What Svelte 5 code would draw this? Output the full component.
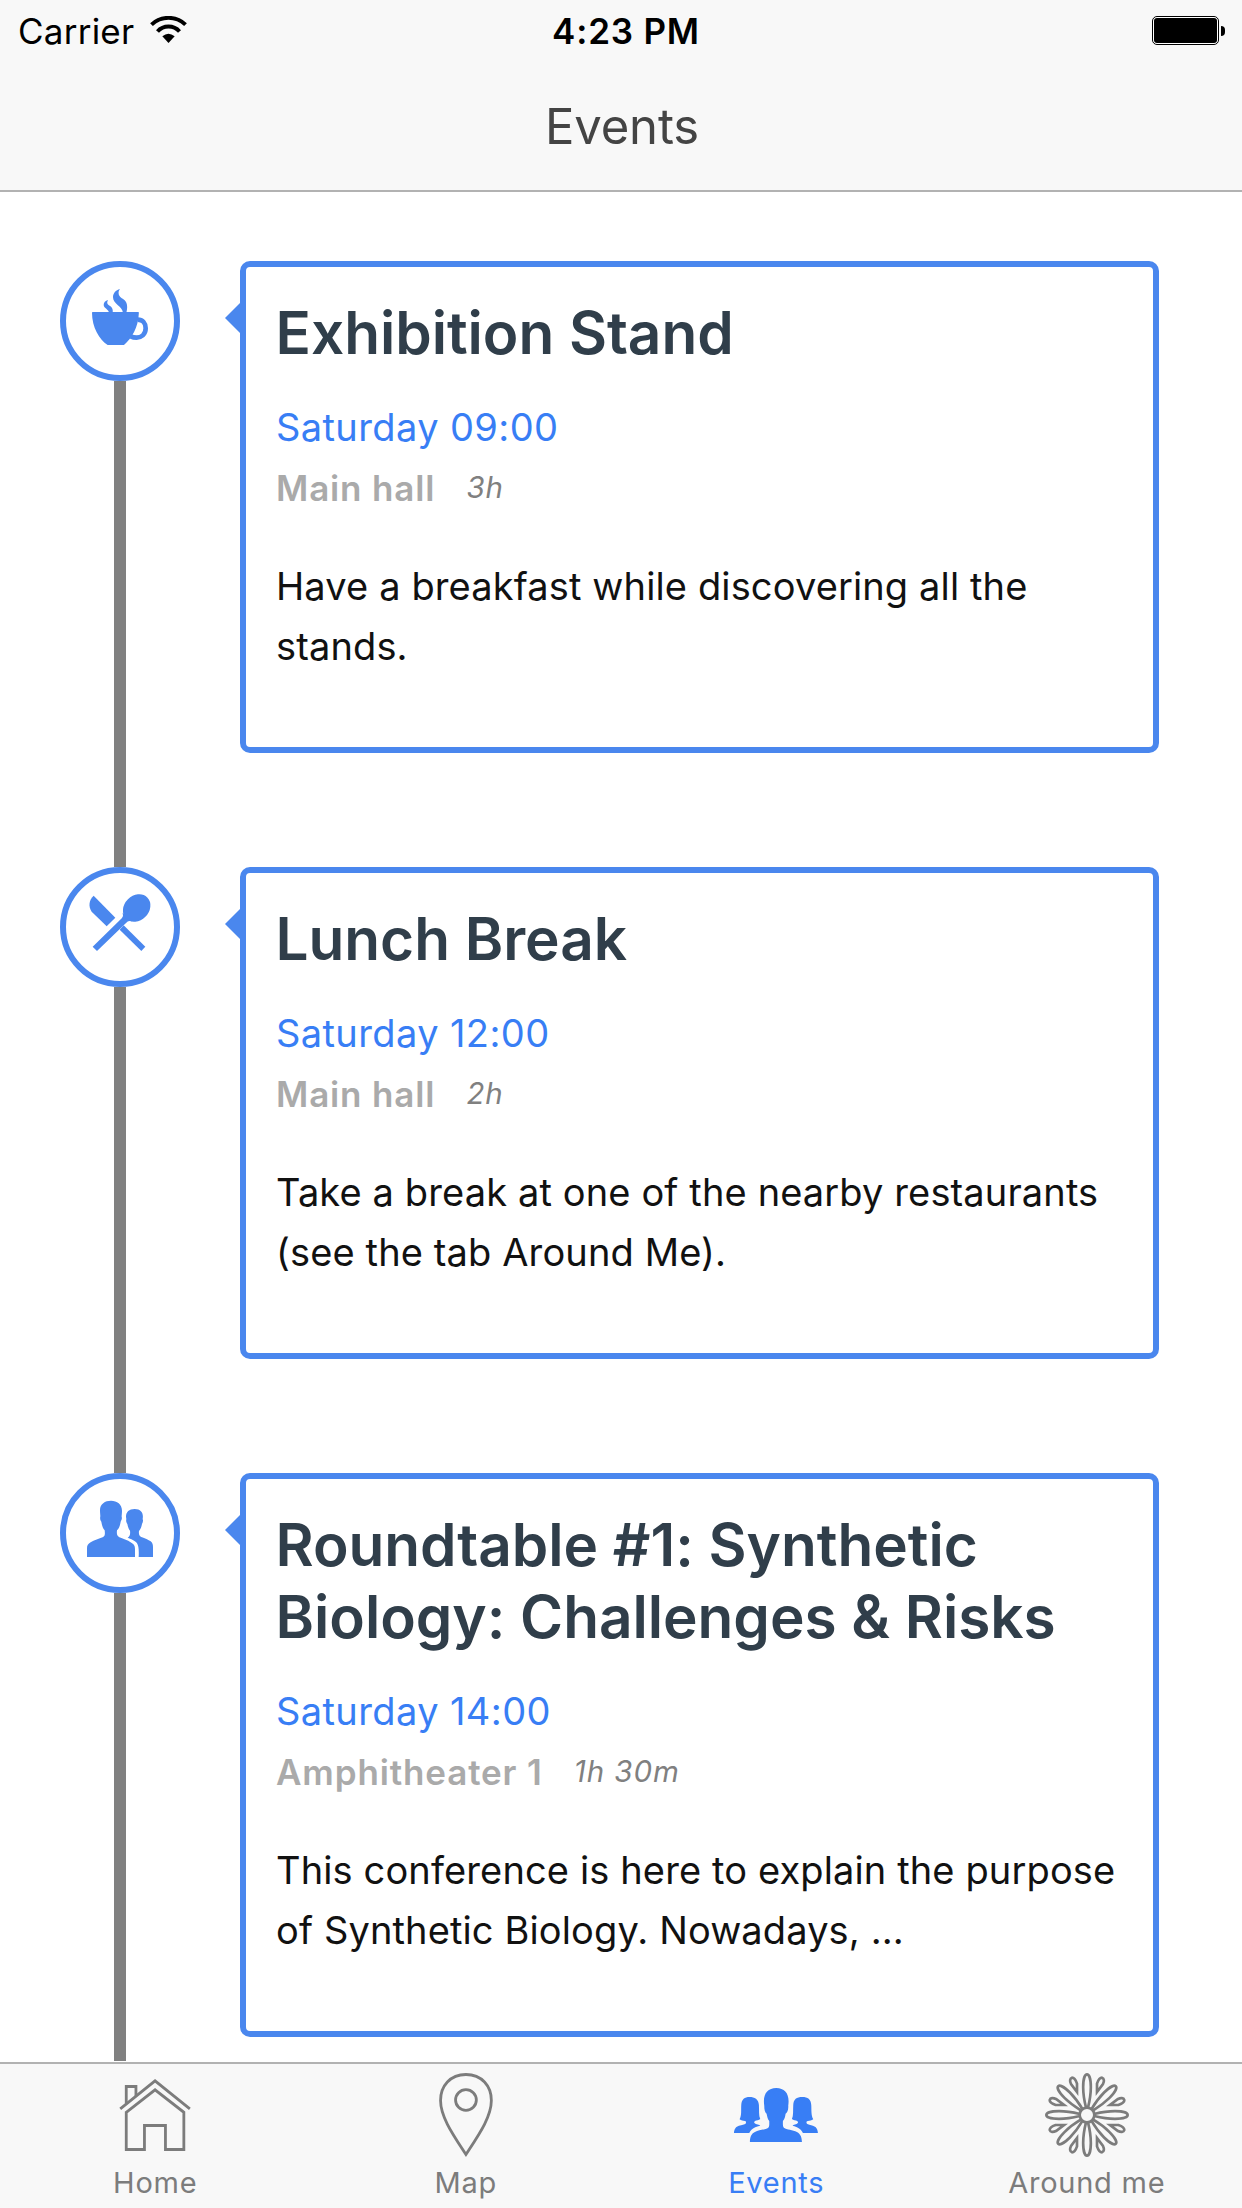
<script>
  const events = [
    {
      icon: 'coffee',
      title: 'Exhibition Stand',
      time: 'Saturday 09:00',
      place: 'Main hall',
      length: '3h',
      text: 'Have a breakfast while discovering all the stands.',
    },
    {
      icon: 'meal',
      title: 'Lunch Break',
      time: 'Saturday 12:00',
      place: 'Main hall',
      length: '2h',
      text: 'Take a break at one of the nearby restaurants (see the tab Around Me).',
    },
    {
      icon: 'people',
      title: 'Roundtable #1: Synthetic Biology: Challenges & Risks',
      time: 'Saturday 14:00',
      place: 'Amphitheater 1',
      length: '1h 30m',
      text: 'This conference is here to explain the purpose of Synthetic Biology. Nowadays, ...',
    },
  ];

  const tabs = [
    { icon: 'home', label: 'Home' },
    { icon: 'pin', label: 'Map' },
    { icon: 'group', label: 'Events', active: true },
    { icon: 'flower', label: 'Around me' },
  ];

  const petals = [0, 45, 90, 135, 180, 225, 270, 315];
  const quarters = [0, 90, 180, 270];
</script>

{#snippet eventIcon(name)}
  {#if name === 'coffee'}
    <svg class="event-icon" viewBox="78 81 324 324">
      <path d="M156 218Q156 216 158 216H295Q297 216 296.500 220C295 262 275 296 252 315H203C178 298 156 262 156 218Z" />
      <path class="handle" d="M293 239C308 239 317 250 317 265C317 284 303 293 290 293C283 293 278 292 272 289" />
      <path d="M240 147C227 150 219 160 219 172C219 192 246 198 249 218H259C263 205 263 190 254 181C247 174 237 171 236 161C235 155 237 151 240 147Z" />
      <path d="M204 180C196 182 191 188 191 195C192 205 206 208 207 218H218C220 206 215 201 209 197C203 193 199 190 204 180Z" />
    </svg>
  {:else if name === 'meal'}
    <svg class="event-icon" viewBox="78 69 324 324">
      <path d="M161 137L226 203L200 229L155 185C145 170 146 150 161 137Z" />
      <path d="M251 226L316 290L304 303L239 239Z" />
      <path d="M158 290L246 204Q251 199 248 188L277 214Q267 211 262 215L171 303Z" />
      <ellipse cx="290" cy="174" rx="45" ry="37" transform="rotate(-45 290 174)" />
    </svg>
  {:else}
    <svg class="event-icon" viewBox="78 87 324 324">
      <path d="M141 321V295C141 285 144 282 152 277C162 271 178 266 188 262C196 258 195 250 194 241C188 234 186 227 184 215C180 210 180 203 181 199C181 195 180 188 180 180C180 162 195 152 213 152C231 152 246 162 246 182C246 190 245 195 245 200C247 206 244 211 242 215C240 227 238 234 231 241C230 250 230 258 238 262C248 266 262 270 274 278C283 284 285 287 285 297V321Z" />
      <path d="M296 321C297 300 296 288 291 280C286 271 272 267 263 263C271 258 271 250 270 242C265 236 264 230 262 222C258 216 258 212 259 207C255 190 264 177 284 177C304 177 311 190 308 207C310 212 309 217 306 222C304 232 302 237 297 243C296 251 297 258 304 261C315 265 325 269 332 274C338 279 339 284 339 292V321Z" />
    </svg>
  {/if}
{/snippet}

{#snippet tabIcon(name)}
  {#if name === 'home'}
    <svg class="tab-icon line" viewBox="110.250 2070 90 90">
      <path d="M120.500 2108.800L155.300 2080.800L190.100 2108.800" />
      <path d="M126.500 2103.500V2086.500H136.200V2096" />
      <path d="M126.500 2112.300L155.300 2089.800L184.100 2112.300V2149.500H165.700V2125.500H144.700V2149.500H126.500Z" />
    </svg>
  {:else if name === 'pin'}
    <svg class="tab-icon line" viewBox="420.750 2070 90 90">
      <path d="M465.700 2074.500C450 2074.500 440.300 2086 440.300 2100.500C440.300 2117 453 2135 465.700 2154.500C478.400 2135 491.100 2117 491.100 2100.500C491.100 2086 481.400 2074.500 465.700 2074.500Z" />
      <circle cx="465.700" cy="2100" r="10.400" />
    </svg>
  {:else if name === 'group'}
    <svg class="tab-icon solid" viewBox="93.250 60 270 270">
      <path d="M150 276C150 262 154 251 165 246C178 239 197 239 205 233C209 229 208 222 208 213C203 208 202 199 200 191C195 187 193 179 193 167C188 133 202 114 229 114C256 114 270 133 265 167C266 179 262 188 257 191C256 199 254 208 249 213C249 222 248 229 252 233C260 239 279 239 291 246C302 252 306 263 306 276Z" />
      <path d="M102 249C103 236 108 230 117 227C126 224 134 224 137 221C140 216 138 213 135 213C129 213 124 211 119 208C126 196 123 178 124 165C125 148 134 141 149 141C164 141 176 148 177 165C178 182 176 197 181 207C177 211 170 211 165 213C161 217 162 219 168 222L181 226C178 230 172 229 166 232C156 237 152 242 148 249Z" />
      <path d="M354 249C353 236 348 230 339 227C332 224 324 224 321 221C318 216 320 213 324 213C329 213 335 211 340 208C333 196 335 178 334 165C333 148 324 141 307 141C290 141 281 148 280 165C279 182 281 197 276 207C280 211 287 211 292 213C296 217 295 219 290 222L278 226C281 230 286 229 291 232C301 237 305 242 309 249Z" />
    </svg>
  {:else}
    <svg class="tab-icon flower" viewBox="-135 -135 270 270">
      {#each petals as angle}
        <path transform="rotate({angle})" d="M-3 -22C-8 -42 -11.500 -62 -11.500 -84C-11.500 -108 -6 -122 0 -122C6 -122 11.500 -108 11.500 -84C11.500 -62 8 -42 3 -22" />
      {/each}
      {#each quarters as angle}
        <g transform="rotate({angle})">
          <path d="M30 -69L30 -94C34 -106 39 -112 45 -112C52 -110 52 -101 48 -93Z" />
          <path d="M-30 -69L-30 -94C-34 -106 -39 -112 -45 -112C-52 -110 -52 -101 -48 -93Z" />
        </g>
      {/each}
      <circle r="22" />
    </svg>
  {/if}
{/snippet}

<div class="screen">
  <header>
    <div class="status">
      <div class="carrier">
        <span>Carrier</span>
        <svg class="wifi" viewBox="450 48 111 81">
          <path class="arc" d="M454.500 74A74 74 0 0 1 556.500 74" />
          <path class="arc" d="M472.500 94.500A44.500 44.500 0 0 1 538.500 94.500" />
          <path d="M487 109Q505 94 524 109L505.500 129Z" />
        </svg>
      </div>
      <div class="clock">4:23 PM</div>
      <div class="battery">
        <div class="cell"><div class="charge"></div></div>
        <div class="nub"></div>
      </div>
    </div>
    <h1>Events</h1>
  </header>

  <main>
    {#each events as event}
      <article>
        <div class="rail">
          <div class="marker">{@render eventIcon(event.icon)}</div>
          <div class="connector"></div>
        </div>
        <div class="card">
          <h2>{event.title}</h2>
          <div class="time">{event.time}</div>
          <div class="meta">
            <strong>{event.place}</strong>
            <em>{event.length}</em>
          </div>
          <p>{event.text}</p>
        </div>
      </article>
    {/each}
  </main>

  <nav>
    {#each tabs as tab}
      <div class="tab" class:active={tab.active}>
        {@render tabIcon(tab.icon)}
        <span>{tab.label}</span>
      </div>
    {/each}
  </nav>
</div>

<style>
  :global(body) {
    margin: 0;
    background: #fff;
  }

  .screen {
    display: flex;
    flex-direction: column;
    width: 1242px;
    height: 2208px;
    overflow: hidden;
    background: #fff;
    font-family: Inter, 'Liberation Sans', sans-serif;
  }

  header {
    box-sizing: border-box;
    flex: none;
    height: 192px;
    border-bottom: 2px solid #b2b2b2;
    background: #f8f8f8;
  }

  .status {
    display: grid;
    grid-template-columns: 1fr auto 1fr;
    align-items: center;
    height: 63px;
    padding: 0 17px 0 18px;
    color: #000;
    font-size: 35px;
    line-height: 63px;
  }

  .carrier {
    display: flex;
    align-items: center;
    gap: 16px;
    letter-spacing: 0.24px;
  }

  .wifi {
    width: 37px;
    height: 27px;
    margin-bottom: 4px;
  }

  .arc {
    fill: none;
    stroke: #000;
    stroke-width: 12;
  }

  .clock {
    padding-left: 9px;
    font-weight: 600;
    letter-spacing: 0.81px;
  }

  .battery {
    display: flex;
    align-items: center;
    justify-content: flex-end;
    gap: 2px;
    margin-bottom: 2px;
  }

  .cell {
    box-sizing: border-box;
    width: 67px;
    height: 29px;
    padding: 1px;
    border: 1px solid #000;
    border-radius: 5px;
    background: #fff;
  }

  .charge {
    height: 100%;
    border-radius: 3px;
    background: #000;
  }

  .nub {
    width: 4px;
    height: 10px;
    border-radius: 0 4px 4px 0;
    background: #000;
  }

  h1 {
    margin: 0;
    padding-left: 2px;
    color: #444;
    font-size: 49px;
    font-weight: 400;
    line-height: 127px;
    letter-spacing: -0.16px;
    text-align: center;
  }

  main {
    flex: 1;
    min-height: 0;
    overflow: hidden;
    padding: 69px 83px 0 60px;
  }

  article {
    display: grid;
    grid-template-columns: 120px 919px;
    column-gap: 60px;
  }

  .rail {
    display: flex;
    flex-direction: column;
    align-items: center;
  }

  .marker {
    box-sizing: border-box;
    flex: none;
    width: 120px;
    height: 120px;
    border: 6px solid #4a87ee;
    border-radius: 50%;
    background: #fff;
  }

  .event-icon {
    display: block;
    width: 108px;
    height: 108px;
    fill: #4a87ee;
  }

  .handle {
    fill: none;
    stroke: #4a87ee;
    stroke-width: 14;
  }

  .connector {
    flex: 1;
    width: 12px;
    background: #808080;
  }

  .card {
    position: relative;
    box-sizing: border-box;
    margin-bottom: 114px;
    padding: 30px 30px 71px 30px;
    border: 6px solid #4a87ee;
    border-radius: 10px;
    background: #fff;
  }

  article:last-child .card {
    margin-bottom: 24px;
  }

  .card::before {
    content: '';
    position: absolute;
    top: 36px;
    left: -21px;
    width: 15px;
    height: 30px;
    background: #4a87ee;
    clip-path: polygon(100% 0, 0 50%, 100% 100%);
  }

  h2 {
    margin: 0 0 28px -0.5px;
    color: #303e4a;
    font-size: 58.5px;
    font-weight: 600;
    line-height: 72px;
    letter-spacing: -0.03px;
  }

  .time {
    color: #387ef5;
    font-size: 38px;
    line-height: 60px;
    letter-spacing: 0.4px;
  }

  .meta {
    display: flex;
    align-items: center;
    gap: 31px;
    margin-top: 1px;
    height: 60px;
  }

  strong {
    color: #aaa;
    font-size: 35px;
    font-weight: 600;
    letter-spacing: 0.86px;
  }

  em {
    margin-bottom: 2px;
    color: #808080;
    font-size: 29.5px;
    letter-spacing: 0.95px;
  }

  p {
    margin: 38px 0 0;
    color: #111;
    font-size: 38px;
    line-height: 60px;
    letter-spacing: 0.13px;
  }

  nav {
    box-sizing: border-box;
    display: grid;
    grid-template-columns: repeat(4, 1fr);
    flex: none;
    height: 146px;
    border-top: 2px solid #b2b2b2;
    background: #f8f8f8;
  }

  .tab {
    display: flex;
    flex-direction: column;
    align-items: center;
    padding-top: 6px;
    color: #7c7c7c;
    font-size: 29px;
    line-height: 40px;
    letter-spacing: 0.75px;
  }

  .tab span {
    margin-top: 3px;
  }

  .tab.active {
    color: #387ef5;
  }

  .tab-icon {
    width: 90px;
    height: 90px;
  }

  .line {
    fill: none;
    stroke: currentColor;
    stroke-width: 2.8;
  }

  .solid {
    fill: currentColor;
  }

  .flower {
    fill: none;
    stroke: currentColor;
    stroke-width: 8;
  }
</style>
